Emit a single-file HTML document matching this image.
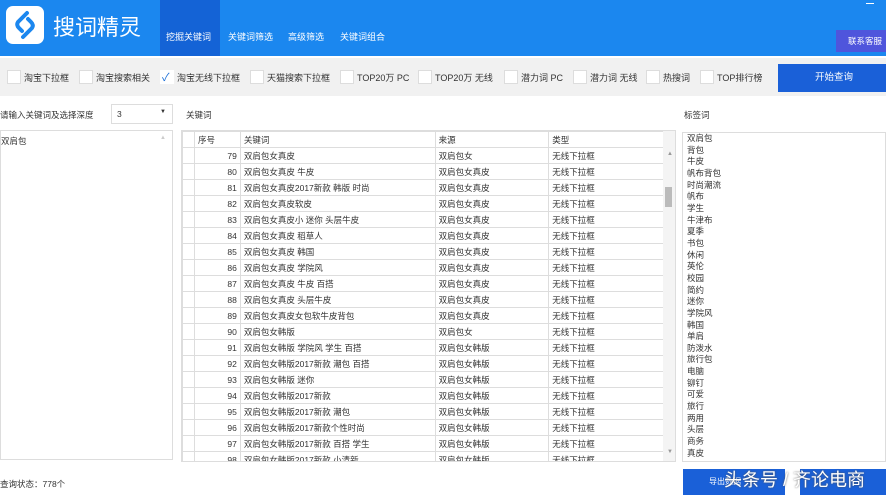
<!DOCTYPE html>
<html><head><meta charset="utf-8"><style>
*{margin:0;padding:0;box-sizing:border-box}
body{width:886px;height:495px;overflow:hidden;background:#fff;font-family:"Liberation Sans","Noto Sans CJK SC",sans-serif;font-size:9px;color:#333;position:relative}
.a{position:absolute}
.hdr{left:0;top:0;width:886px;height:56px;background:#1b87ef}
.tab{top:30px;color:#fff;font-size:9px}
.tb{left:0;top:58px;width:886px;height:38px;background:#f1f1f1}
.cb{top:70px;width:14px;height:14px;background:#fff;border:1px solid #ddd}
.lab{top:71px;font-size:9px;color:#333}
table{border-collapse:collapse;font-size:8.5px}
td{height:16px;border:1px solid #ddd;padding:0 3px;white-space:nowrap;overflow:hidden}
.tags div{height:11.67px;line-height:11.67px;font-size:8.5px}
</style></head><body>
<div class="a hdr"></div>
<div class="a" style="left:6px;top:6px;width:38px;height:38px;background:#fff;border-radius:7px"></div>
<svg class="a" style="left:10px;top:9px" width="30" height="32" viewBox="0 0 30 32"><path d="M17 4 L8 13 Q6 16 9 19 L12 22" stroke="#1b87ef" stroke-width="4" fill="none" stroke-linecap="round"/><path d="M13 28 L22 19 Q24 16 21 13 L18 10" stroke="#1b87ef" stroke-width="4" fill="none" stroke-linecap="round"/></svg>
<div class="a" style="left:53px;top:10px;color:#fff;font-size:22px">搜词精灵</div>
<div class="a" style="left:160px;top:0;width:60px;height:56px;background:#1463d6"></div>
<div class="a tab" style="left:166px">挖掘关键词</div>
<div class="a tab" style="left:228px">关键词筛选</div>
<div class="a tab" style="left:288px">高级筛选</div>
<div class="a tab" style="left:340px">关键词组合</div>
<div class="a" style="left:866px;top:3px;width:8px;height:1px;background:#fff"></div>
<div class="a" style="left:836px;top:30px;width:50px;height:22px;background:#4f55dc;color:#fff;font-size:8.5px;line-height:22px;padding-left:12px">联系客服</div>
<div class="a tb"></div>
<div class="a cb" style="left:7px"></div><div class="a lab" style="left:24px">淘宝下拉框</div>
<div class="a cb" style="left:79px"></div><div class="a lab" style="left:96px">淘宝搜索相关</div>
<div class="a cb" style="left:160px;border-color:#fff"></div><div class="a" style="left:162px;top:69px;color:#1b6fd8;font-size:11px">✓</div><div class="a lab" style="left:177px">淘宝无线下拉框</div>
<div class="a cb" style="left:250px"></div><div class="a lab" style="left:267px">天猫搜索下拉框</div>
<div class="a cb" style="left:340px"></div><div class="a lab" style="left:357px">TOP20万 PC</div>
<div class="a cb" style="left:418px"></div><div class="a lab" style="left:435px">TOP20万 无线</div>
<div class="a cb" style="left:504px"></div><div class="a lab" style="left:521px">潜力词 PC</div>
<div class="a cb" style="left:573px"></div><div class="a lab" style="left:590px">潜力词 无线</div>
<div class="a cb" style="left:646px"></div><div class="a lab" style="left:663px">热搜词</div>
<div class="a cb" style="left:700px"></div><div class="a lab" style="left:717px">TOP排行榜</div>
<div class="a" style="left:778px;top:64px;width:108px;height:28px;background:#1a60d8;color:#fff;font-size:9.5px;line-height:28px;padding-left:37px">开始查询</div>
<div class="a" style="left:0;top:109px;font-size:8.5px">请输入关键词及选择深度</div>
<div class="a" style="left:111px;top:104px;width:62px;height:20px;border:1px solid #ddd;padding:4px 5px;font-size:8.5px">3<span style="position:absolute;right:6px;top:4px;font-size:6px">▼</span></div>
<div class="a" style="left:186px;top:109px;font-size:8.5px">关键词</div>
<div class="a" style="left:684px;top:109px;font-size:8.5px">标签词</div>
<div class="a" style="left:0;top:130px;width:173px;height:330px;border:1px solid #ddd;padding:4px 0 0 0;font-size:8.5px">双肩包<span style="position:absolute;right:6px;top:4px;color:#ccc;font-size:6px">▲</span></div>
<div class="a" style="left:181px;top:130px;width:495px;height:332px;border:1px solid #ddd;overflow:hidden">
<table style="width:482px">
<colgroup><col style="width:12px"><col style="width:46px"><col style="width:195px"><col style="width:114px"><col style="width:115px"></colgroup>
<tr><td></td><td>序号</td><td>关键词</td><td>来源</td><td>类型</td></tr>
<tr><td></td><td style="text-align:right">79</td><td>双肩包女真皮</td><td>双肩包女</td><td>无线下拉框</td></tr>
<tr><td></td><td style="text-align:right">80</td><td>双肩包女真皮 牛皮</td><td>双肩包女真皮</td><td>无线下拉框</td></tr>
<tr><td></td><td style="text-align:right">81</td><td>双肩包女真皮2017新款 韩版 时尚</td><td>双肩包女真皮</td><td>无线下拉框</td></tr>
<tr><td></td><td style="text-align:right">82</td><td>双肩包女真皮软皮</td><td>双肩包女真皮</td><td>无线下拉框</td></tr>
<tr><td></td><td style="text-align:right">83</td><td>双肩包女真皮小 迷你 头层牛皮</td><td>双肩包女真皮</td><td>无线下拉框</td></tr>
<tr><td></td><td style="text-align:right">84</td><td>双肩包女真皮 稻草人</td><td>双肩包女真皮</td><td>无线下拉框</td></tr>
<tr><td></td><td style="text-align:right">85</td><td>双肩包女真皮 韩国</td><td>双肩包女真皮</td><td>无线下拉框</td></tr>
<tr><td></td><td style="text-align:right">86</td><td>双肩包女真皮 学院风</td><td>双肩包女真皮</td><td>无线下拉框</td></tr>
<tr><td></td><td style="text-align:right">87</td><td>双肩包女真皮 牛皮 百搭</td><td>双肩包女真皮</td><td>无线下拉框</td></tr>
<tr><td></td><td style="text-align:right">88</td><td>双肩包女真皮 头层牛皮</td><td>双肩包女真皮</td><td>无线下拉框</td></tr>
<tr><td></td><td style="text-align:right">89</td><td>双肩包女真皮女包软牛皮背包</td><td>双肩包女真皮</td><td>无线下拉框</td></tr>
<tr><td></td><td style="text-align:right">90</td><td>双肩包女韩版</td><td>双肩包女</td><td>无线下拉框</td></tr>
<tr><td></td><td style="text-align:right">91</td><td>双肩包女韩版 学院风 学生 百搭</td><td>双肩包女韩版</td><td>无线下拉框</td></tr>
<tr><td></td><td style="text-align:right">92</td><td>双肩包女韩版2017新款 潮包 百搭</td><td>双肩包女韩版</td><td>无线下拉框</td></tr>
<tr><td></td><td style="text-align:right">93</td><td>双肩包女韩版 迷你</td><td>双肩包女韩版</td><td>无线下拉框</td></tr>
<tr><td></td><td style="text-align:right">94</td><td>双肩包女韩版2017新款</td><td>双肩包女韩版</td><td>无线下拉框</td></tr>
<tr><td></td><td style="text-align:right">95</td><td>双肩包女韩版2017新款 潮包</td><td>双肩包女韩版</td><td>无线下拉框</td></tr>
<tr><td></td><td style="text-align:right">96</td><td>双肩包女韩版2017新款个性时尚</td><td>双肩包女韩版</td><td>无线下拉框</td></tr>
<tr><td></td><td style="text-align:right">97</td><td>双肩包女韩版2017新款 百搭 学生</td><td>双肩包女韩版</td><td>无线下拉框</td></tr>
<tr><td></td><td style="text-align:right">98</td><td>双肩包女韩版2017新款 小清新</td><td>双肩包女韩版</td><td>无线下拉框</td></tr>
</table>
<div class="a" style="right:0;top:0;width:12px;height:330px;background:#f4f4f4"></div>
<div class="a" style="right:3px;top:56px;width:7px;height:20px;background:#bbb"></div>
<div class="a" style="right:2px;top:20px;font-size:6px;color:#999">▲</div>
<div class="a" style="right:2px;top:318px;font-size:6px;color:#999">▼</div>
</div>
<div class="a tags" style="left:682px;top:132px;width:204px;height:330px;border:1px solid #ddd;padding-left:4px">
<div>双肩包</div><div>背包</div><div>牛皮</div><div>帆布背包</div><div>时尚潮流</div><div>帆布</div><div>学生</div><div>牛津布</div><div>夏季</div><div>书包</div><div>休闲</div><div>英伦</div><div>校园</div><div>简约</div><div>迷你</div><div>学院风</div><div>韩国</div><div>单肩</div><div>防泼水</div><div>旅行包</div><div>电脑</div><div>铆钉</div><div>可爱</div><div>旅行</div><div>两用</div><div>头层</div><div>商务</div><div>真皮</div>
</div>
<div class="a" style="left:0;top:478px;font-size:8.5px">查询状态：778个</div>
<div class="a" style="left:683px;top:469px;width:102px;height:26px;background:#1a60d8;color:#fff;font-size:8px;line-height:26px;padding-left:26px">导出数据</div>
<div class="a" style="left:800px;top:469px;width:86px;height:26px;background:#1a60d8"></div>
<div class="a" style="left:724px;top:466px;color:#fff;font-size:18px;text-shadow:0 0 2px #555">头条号 / 齐论电商</div>
</body></html>
